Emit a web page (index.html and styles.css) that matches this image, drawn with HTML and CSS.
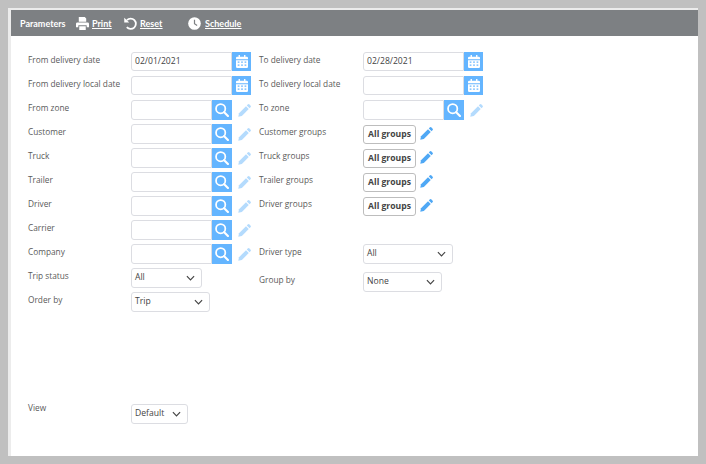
FILE: index.html
```html
<!DOCTYPE html>
<html lang="en">
<head>
<meta charset="utf-8">
<title>Parameters</title>
<link rel="stylesheet" href="styles.css">
</head>
<body>
<svg class="defs" width="0" height="0" aria-hidden="true">
  <symbol id="cal" viewBox="0 0 14 15">
    <path fill="#fff" d="M3 0h1.6v2H9.4V0H11v2h1.6A1.4 1.4 0 0 1 14 3.4V5H0V3.4A1.4 1.4 0 0 1 1.4 2H3z"/>
    <path fill="#fff" fill-rule="evenodd" d="M0 6h14v7.6a1.4 1.4 0 0 1-1.400 1.400H1.400A1.400 1.400 0 0 1 0 13.600zM2 7.500v1.500h2V7.500zM6 7.500v1.500h2V7.500zM10 7.500v1.500h2V7.500zM2 11v1.500h2V11zM6 11v1.500h2V11zM10 11v1.500h2V11z"/>
  </symbol>
  <symbol id="search" viewBox="0 0 16 16">
    <circle cx="6.500" cy="6.500" r="5.300" fill="none" stroke="#fff" stroke-width="2"/>
    <path d="M10.500 10.500l4.300 4.300" stroke="#fff" stroke-width="2.400" stroke-linecap="round"/>
  </symbol>
  <symbol id="pencil" viewBox="0 0 14 14">
    <path d="M0.300 13.700l0.800-3.800 7.500-7.500 3 3-7.500 7.500z"/>
    <path d="M9.500 1.500l0.900-0.900a1.400 1.400 0 0 1 2 0l1 1a1.400 1.400 0 0 1 0 2l-0.900 0.900z"/>
  </symbol>
  <symbol id="chev" viewBox="0 0 10 6">
    <path d="M1 1l4 4 4-4" fill="none" stroke="#444" stroke-width="1.300"/>
  </symbol>
</svg>

<main class="panel">
  <header class="toolbar">
    <span class="title">Parameters</span>
    <a class="tool tool-print" href="#">
      <svg class="tool-icon" viewBox="0 0 14 14"><path fill="#fff" d="M3 0h6.500L11 1.500V5H3zM1.500 5.800h11A1.500 1.500 0 0 1 14 7.300v3.700h-2.500V9h-9v2H0V7.300a1.500 1.500 0 0 1 1.500-1.500zM3.500 10h7v4h-7z"/></svg>
      <span>Print</span>
    </a>
    <a class="tool tool-reset" href="#">
      <svg class="tool-icon" viewBox="0 0 14 14"><path fill="none" stroke="#fff" stroke-width="1.900" d="M3.200 3.300A5.600 5.600 0 1 1 3 11"/><path fill="#fff" d="M0.300 0.800l5.300 5.200H0.300z"/></svg>
      <span>Reset</span>
    </a>
    <a class="tool tool-schedule" href="#">
      <svg class="tool-icon" viewBox="0 0 14 14"><circle cx="7" cy="7" r="6.800" fill="#fff"/><path d="M7 3v4.200l2.800 2" fill="none" stroke="#7d8083" stroke-width="1.300"/></svg>
      <span>Schedule</span>
    </a>
  </header>

  <div class="form">
    <section class="col col-left">
      <div class="row"><label class="lbl">From delivery date</label><div class="ctl"><span class="field field-date">02/01/2021</span><span class="btn"><svg class="ic-cal"><use href="#cal"/></svg></span></div></div>
      <div class="row"><label class="lbl">From delivery local date</label><div class="ctl"><span class="field field-date"></span><span class="btn"><svg class="ic-cal"><use href="#cal"/></svg></span></div></div>
      <div class="row"><label class="lbl">From zone</label><div class="ctl"><span class="field field-lookup"></span><span class="btn btn-search"><svg class="ic-search"><use href="#search"/></svg></span><svg class="ic-pencil faded"><use href="#pencil"/></svg></div></div>
      <div class="row"><label class="lbl">Customer</label><div class="ctl"><span class="field field-lookup"></span><span class="btn btn-search"><svg class="ic-search"><use href="#search"/></svg></span><svg class="ic-pencil faded"><use href="#pencil"/></svg></div></div>
      <div class="row"><label class="lbl">Truck</label><div class="ctl"><span class="field field-lookup"></span><span class="btn btn-search"><svg class="ic-search"><use href="#search"/></svg></span><svg class="ic-pencil faded"><use href="#pencil"/></svg></div></div>
      <div class="row"><label class="lbl">Trailer</label><div class="ctl"><span class="field field-lookup"></span><span class="btn btn-search"><svg class="ic-search"><use href="#search"/></svg></span><svg class="ic-pencil faded"><use href="#pencil"/></svg></div></div>
      <div class="row"><label class="lbl">Driver</label><div class="ctl"><span class="field field-lookup"></span><span class="btn btn-search"><svg class="ic-search"><use href="#search"/></svg></span><svg class="ic-pencil faded"><use href="#pencil"/></svg></div></div>
      <div class="row"><label class="lbl">Carrier</label><div class="ctl"><span class="field field-lookup"></span><span class="btn btn-search"><svg class="ic-search"><use href="#search"/></svg></span><svg class="ic-pencil faded"><use href="#pencil"/></svg></div></div>
      <div class="row"><label class="lbl">Company</label><div class="ctl"><span class="field field-lookup"></span><span class="btn btn-search"><svg class="ic-search"><use href="#search"/></svg></span><svg class="ic-pencil faded"><use href="#pencil"/></svg></div></div>
      <div class="row"><label class="lbl">Trip status</label><div class="ctl"><span class="select sel-trip">All<svg class="ic-chev"><use href="#chev"/></svg></span></div></div>
      <div class="row"><label class="lbl">Order by</label><div class="ctl"><span class="select sel-order">Trip<svg class="ic-chev"><use href="#chev"/></svg></span></div></div>
      <div class="row row-view"><label class="lbl lbl-view">View</label><div class="ctl"><span class="select sel-view">Default<svg class="ic-chev"><use href="#chev"/></svg></span></div></div>
    </section>

    <section class="col col-right">
      <div class="row"><label class="lbl">To delivery date</label><div class="ctl"><span class="field field-date">02/28/2021</span><span class="btn"><svg class="ic-cal"><use href="#cal"/></svg></span></div></div>
      <div class="row"><label class="lbl">To delivery local date</label><div class="ctl"><span class="field field-date"></span><span class="btn"><svg class="ic-cal"><use href="#cal"/></svg></span></div></div>
      <div class="row"><label class="lbl">To zone</label><div class="ctl"><span class="field field-lookup"></span><span class="btn btn-search"><svg class="ic-search"><use href="#search"/></svg></span><svg class="ic-pencil faded"><use href="#pencil"/></svg></div></div>
      <div class="row"><label class="lbl">Customer groups</label><div class="ctl"><span class="groups">All groups</span><svg class="ic-pencil solid"><use href="#pencil"/></svg></div></div>
      <div class="row"><label class="lbl">Truck groups</label><div class="ctl"><span class="groups">All groups</span><svg class="ic-pencil solid"><use href="#pencil"/></svg></div></div>
      <div class="row"><label class="lbl">Trailer groups</label><div class="ctl"><span class="groups">All groups</span><svg class="ic-pencil solid"><use href="#pencil"/></svg></div></div>
      <div class="row"><label class="lbl">Driver groups</label><div class="ctl"><span class="groups">All groups</span><svg class="ic-pencil solid"><use href="#pencil"/></svg></div></div>
      <div class="row row-blank"></div>
      <div class="row row-tall"><label class="lbl">Driver type</label><div class="ctl"><span class="select sel-type">All<svg class="ic-chev"><use href="#chev"/></svg></span></div></div>
      <div class="row"><label class="lbl">Group by</label><div class="ctl"><span class="select sel-group">None<svg class="ic-chev"><use href="#chev"/></svg></span></div></div>
    </section>
  </div>
</main>
</body>
</html>
```

FILE: styles.css
```css
* { box-sizing: border-box; }

html, body { height: 100%; }

body {
  margin: 0;
  padding: 8px;
  background: #c0c0c0;
  font-family: "Open Sans", "Liberation Sans", sans-serif;
  font-size: 8.300px;
  color: #5a5a5a;
}

.defs { display: block; height: 0; }

.panel {
  width: 690px;
  height: 448px;
  background: #fff;
  border-top: 2px solid #ececec;
  border-left: 3px solid #ececec;
}

.toolbar {
  display: flex;
  align-items: center;
  height: 26px;
  background: #7d8083;
  color: #fff;
  font-family: Lato, "Liberation Sans", sans-serif;
  font-size: 9px;
  font-weight: 700;
  padding-left: 9px;
}

.title { width: 56px; }

.tool {
  display: flex;
  align-items: center;
  color: #fff;
}

.tool span { text-decoration: underline; }

.tool-icon { width: 13px; height: 13px; margin-right: 3px; }

.tool-print { width: 48px; }
.tool-reset { width: 64px; }
.tool-schedule .tool-icon { margin-right: 4px; }

.form {
  display: flex;
  padding: 16px 0 0 17px;
}

.col { display: flex; flex-direction: column; }
.col-left { width: 231px; }

.row {
  display: flex;
  height: 24px;
}

.row-blank { height: 24px; }
.row-tall { height: 28px; }
.row-view { margin-top: 88px; }

.lbl {
  flex: none;
  width: 103px;
  height: 15px;
  line-height: 15px;
  white-space: nowrap;
}

.lbl-view { margin-top: -4px; }

.col-right .lbl { width: 104px; }

.ctl {
  display: flex;
  align-items: flex-start;
  height: 20px;
}

.field {
  display: block;
  height: 20px;
  line-height: 18px;
  padding-left: 3px;
  border: 1px solid #dcdde2;
  border-radius: 3px 0 0 3px;
  color: #444;
  background: #fff;
  font-size: 8.600px;
}

.field-date { width: 101px; height: 19px; line-height: 17px; }
.field-lookup { width: 81px; }

.btn {
  display: flex;
  align-items: center;
  justify-content: center;
  width: 19px;
  height: 19px;
  background: #64b5ff;
}

.btn-search { width: 20px; height: 20px; }

.ic-cal { width: 12px; height: 13px; }
.ic-search { width: 14px; height: 14px; }

.ic-pencil {
  width: 13px;
  height: 13px;
  margin-top: 4px;
}

.btn-search + .ic-pencil { margin-left: 6px; }
.faded { fill: #b4dbfd; }
.solid { fill: #4fa8f5; margin-top: 3px; margin-left: 4px; }

.groups {
  display: block;
  width: 53px;
  height: 19px;
  line-height: 16px;
  margin-top: 1px;
  text-align: center;
  border: 1px solid #bdbdbd;
  border-radius: 3px;
  color: #444;
  font-size: 8.600px;
  font-weight: 700;
  white-space: nowrap;
}

.select {
  display: flex;
  align-items: center;
  justify-content: space-between;
  height: 20px;
  padding: 0 6px 2px 3px;
  border: 1px solid #dcdde2;
  border-radius: 3px;
  color: #444;
  background: #fff;
  font-size: 8.600px;
}

.ic-chev { width: 9px; height: 6px; margin-top: 2px; }

.sel-trip { width: 71px; }
.sel-order { width: 79px; }
.sel-view { width: 57px; }
.sel-type { width: 90px; }
.sel-group { width: 79px; }
```
